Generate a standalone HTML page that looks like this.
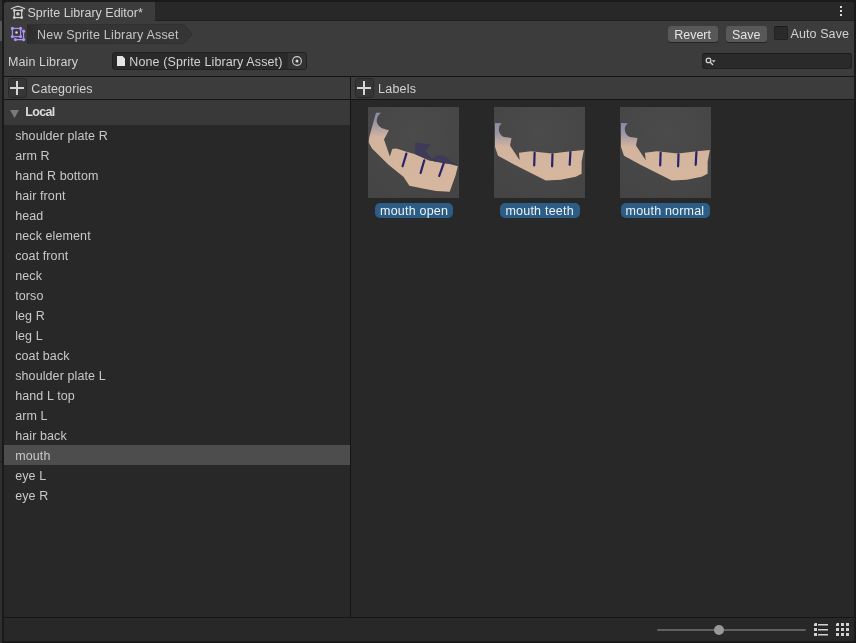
<!DOCTYPE html>
<html><head><meta charset="utf-8">
<style>
*{box-sizing:border-box;margin:0;padding:0}
html,body{width:856px;height:643px;overflow:hidden;background:#1a1a1a;font-family:"Liberation Sans",sans-serif;font-size:12.5px;color:#d2d2d2}
div{position:absolute}
.t{white-space:nowrap;line-height:14px}
.hl{height:1px;background:#151515}
.vl{width:1px;background:#151515}
.plus{width:18.8px;height:19.5px;border-radius:3px;background:#363636;border:1px solid #2a2a2a}
.plus:before{content:"";position:absolute;left:1px;top:8px;width:14px;height:2px;background:#d6d6d6}
.plus:after{content:"";position:absolute;left:7px;top:2px;width:2px;height:14px;background:#d6d6d6}
.item{color:#c8c8c8;letter-spacing:0.1px}
.btn{height:16px;background:#585858;border-radius:3px;box-shadow:0 1px 0 #242424}
.thumb{top:107px;width:91px;height:91px;background:#484848}
.pill{top:203px;height:15px;background:#2c5d87;border-radius:5px}
.pt{color:#eef2f6}
</style></head><body><div id="root" style="left:0;top:0;width:856px;height:643px;will-change:transform">
<!-- left strip (other window edge) -->
<div style="left:0;top:0;width:2px;height:643px;background:#2f2f2f"></div>
<div style="left:0;top:461px;width:2px;height:1px;background:#1c1c1c"></div>
<div style="left:0;top:21px;width:2px;height:20px;background:#565656"></div>

<!-- window base -->
<div style="left:4px;top:2px;width:850px;height:639px;background:#3c3c3c;border-radius:3px 3px 0 0;overflow:hidden">
  <div style="left:151px;top:0;width:699px;height:19px;background:#282828"></div>
  <div style="left:151px;top:18px;width:699px;height:1px;background:#202020"></div>
</div>


<!-- tab icon -->
<svg style="position:absolute;left:0;top:0" width="40" height="45" viewBox="0 0 40 45">
  <path d="M11.3,8.7 L15.2,7 Q17.9,5.9 20.6,7 L24.6,8.7" fill="none" stroke="#d2d2d2" stroke-width="1.25" stroke-linecap="round" stroke-linejoin="round"/>
  <rect x="14.3" y="10.4" width="7.4" height="7.2" fill="none" stroke="#d0d0d0" stroke-width="1.2"/>
  <circle cx="14.3" cy="10.4" r="1.35" fill="#d0d0d0"/><circle cx="21.7" cy="10.4" r="1.35" fill="#d0d0d0"/>
  <circle cx="14.3" cy="17.6" r="1.35" fill="#d0d0d0"/><circle cx="21.7" cy="17.6" r="1.35" fill="#d0d0d0"/>
  <circle cx="17.9" cy="13.9" r="1.7" fill="#cfcfcf"/>
  <!-- purple icon -->
  <g fill="#ad91f6" stroke="#ad91f6">
  <rect x="12.4" y="28.4" width="8.2" height="8.2" fill="none" stroke-width="1.15"/>
  <polyline points="23.6,31.2 23.6,39.6 15.4,39.6" fill="none" stroke-width="1.15"/>
  <circle cx="12.4" cy="28.4" r="1.6" stroke="none"/><circle cx="20.6" cy="28.4" r="1.6" stroke="none"/>
  <circle cx="12.4" cy="36.6" r="1.6" stroke="none"/><circle cx="20.6" cy="36.6" r="1.6" stroke="none"/>
  <circle cx="23.6" cy="31.2" r="1.6" stroke="none"/><circle cx="23.6" cy="39.6" r="1.6" stroke="none"/><circle cx="15.4" cy="39.6" r="1.6" stroke="none"/>
  </g>
  <circle cx="16.5" cy="32.5" r="1.2" fill="#d8d8d8"/>
</svg>
<!-- kebab -->
<div style="left:840px;top:6px;width:2px;height:2px;background:#dadada;box-shadow:0 4px 0 #dadada,0 8px 0 #dadada"></div>
<!-- tab -->
<div class="t" style="left:27.5px;top:6.3px">Sprite Library Editor*</div>


<!-- breadcrumb box -->
<svg style="position:absolute;left:26px;top:23px" width="170" height="22" viewBox="26 23 170 22">
  <defs><linearGradient id="cg" x1="0" x2="1" y1="0" y2="0"><stop offset="0" stop-color="#2c2c2c"/><stop offset="0.09" stop-color="#343434"/><stop offset="1" stop-color="#353535"/></linearGradient></defs>
  <path d="M27.5,24.5 H184 L192,34 L184,43.5 H27.5 Z" fill="url(#cg)" stroke="#303030" stroke-width="1"/>
  <path d="M27.5,24 V44" stroke="#2a2a2a" stroke-width="1"/>
</svg>
<!-- breadcrumb -->
<div class="t" style="left:37px;top:28.1px;color:#c4c4c4;letter-spacing:0.2px">New Sprite Library Asset</div>

<!-- main library row -->
<div class="t" style="left:8px;top:54.8px;letter-spacing:0.11px">Main Library</div>
<div style="left:112px;top:52px;width:195px;height:18px;background:#2a2a2a;border:1px solid #212121;border-radius:3px"></div>

<div style="left:288px;top:53px;width:18px;height:16px;background:#333333;border-radius:0 2px 2px 0"></div>
<svg style="position:absolute;left:110px;top:50px" width="200" height="22" viewBox="110 50 200 22">
  <path d="M117,56 H122.5 L125,58.5 V66 H117 Z" fill="#e4e4e4"/>
  <circle cx="297" cy="61" r="4.4" fill="none" stroke="#cfcfcf" stroke-width="1.1"/>
  <circle cx="297" cy="61" r="1.5" fill="#d8d8d8"/>
</svg>

<div class="t" style="left:129.3px;top:55.3px;letter-spacing:0.115px">None (Sprite Library Asset)</div>

<!-- buttons -->
<div class="btn" style="left:668px;top:26px;width:50px"></div>
<div class="btn" style="left:726px;top:26px;width:41px"></div>
<div class="t" style="left:674.2px;top:28.1px;color:#e4e4e4">Revert</div>
<div class="t" style="left:732px;top:28.1px;color:#e4e4e4">Save</div>
<div style="left:774px;top:26px;width:14px;height:14px;background:#2a2a2a;border:1px solid #222;border-top-color:#191919;border-radius:2px"></div>
<div class="t" style="left:790.6px;top:27.0px;letter-spacing:0.08px">Auto Save</div>
<div style="left:702px;top:53px;width:150px;height:15.5px;background:#2a2a2a;border:1px solid #222;border-top-color:#1a1a1a;border-radius:3px"></div>
<svg style="position:absolute;left:700px;top:52px" width="30" height="18" viewBox="700 52 30 18">
  <circle cx="708.5" cy="60.4" r="2.3" fill="none" stroke="#d0d0d0" stroke-width="1.3"/>
  <path d="M710.3,62.3 L713,65" stroke="#d0d0d0" stroke-width="1.4"/>
  <path d="M711.8,60.2 H715.6 L713.7,62.4 Z" fill="#cfcfcf"/>
</svg>

<!-- separators & headers -->
<div class="hl" style="left:4px;top:76px;width:850px"></div>
<div class="hl" style="left:4px;top:99px;width:850px"></div>
<div class="vl" style="left:350px;top:77px;height:540px"></div>
<div class="plus" style="left:7.8px;top:78px"></div>
<div class="t" style="left:31.3px;top:82.1px;letter-spacing:0.09px">Categories</div>
<div class="plus" style="left:354.8px;top:78px"></div>
<div class="t" style="left:378.1px;top:82.2px;letter-spacing:0.2px">Labels</div>

<!-- lists -->
<div style="left:4px;top:100px;width:346px;height:517px;background:#282828"></div>
<div style="left:351px;top:100px;width:503px;height:517px;background:#282828"></div>
<div style="left:4px;top:100px;width:346px;height:25px;background:#393939"></div>
<svg style="position:absolute;left:8px;top:108px" width="14" height="12" viewBox="8 108 14 12"><path d="M10,110 H19 L14.5,118 Z" fill="#7a7a7a"/></svg>
<div class="t" style="left:25.3px;top:105px;font-weight:bold;color:#dcdcdc;letter-spacing:-0.65px">Local</div>

<div style="left:4px;top:445px;width:346px;height:20px;background:#4d4d4d"></div>
<div class="item t" style="left:15.2px;top:129.3px">shoulder plate R</div>
<div class="item t" style="left:15.2px;top:149.3px">arm R</div>
<div class="item t" style="left:15.2px;top:169.3px">hand R bottom</div>
<div class="item t" style="left:15.2px;top:189.3px">hair front</div>
<div class="item t" style="left:15.2px;top:209.3px">head</div>
<div class="item t" style="left:15.2px;top:229.3px">neck element</div>
<div class="item t" style="left:15.2px;top:249.3px">coat front</div>
<div class="item t" style="left:15.2px;top:269.3px">neck</div>
<div class="item t" style="left:15.2px;top:289.3px">torso</div>
<div class="item t" style="left:15.2px;top:309.3px">leg R</div>
<div class="item t" style="left:15.2px;top:329.3px">leg L</div>
<div class="item t" style="left:15.2px;top:349.3px">coat back</div>
<div class="item t" style="left:15.2px;top:369.3px">shoulder plate L</div>
<div class="item t" style="left:15.2px;top:389.3px">hand L top</div>
<div class="item t" style="left:15.2px;top:409.3px">arm L</div>
<div class="item t" style="left:15.2px;top:429.3px">hair back</div>
<div class="item t" style="left:15.2px;top:449.3px">mouth</div>
<div class="item t" style="left:15.2px;top:469.3px">eye L</div>
<div class="item t" style="left:15.2px;top:489.3px">eye R</div>

<!-- thumbnails -->
<svg style="position:absolute;left:0;top:0" width="1" height="1"><defs>
<linearGradient id="jg" x1="0" x2="0" y1="0" y2="1" gradientUnits="objectBoundingBox"><stop offset="0" stop-color="#8a8ba8"/><stop offset="0.12" stop-color="#9a94a6"/><stop offset="0.3" stop-color="#d2b39c"/><stop offset="1" stop-color="#d6b79e"/></linearGradient>
<linearGradient id="jg2" x1="0" x2="0" y1="0" y2="1" gradientUnits="objectBoundingBox"><stop offset="0" stop-color="#8a8ba8"/><stop offset="0.18" stop-color="#9c95a5"/><stop offset="0.4" stop-color="#d2b39c"/><stop offset="1" stop-color="#d6b79e"/></linearGradient>
<radialGradient id="bg" cx="0.5" cy="0.3" r="0.8"><stop offset="0" stop-color="#4b4b4b"/><stop offset="1" stop-color="#444444"/></radialGradient>
</defs></svg>
<svg style="position:absolute;left:368px;top:107px" width="91" height="91" viewBox="0 0 91 91">
  <rect width="91" height="91" fill="url(#bg)"/>
  <path d="M8,5.8 L12.9,5.8 Q8.2,10 8.7,14.5 Q10,20.5 16.4,21.9 L20.9,23.3 L16,32.4 L21.9,49.6 L24.2,42.1 Q27,41.2 29.4,41.7 L36.9,44.3 L47.3,47.3 L60.8,53.3 L68.2,54.8 L81.7,57 L89.9,59.3 L87.6,68.2 L81.7,84.7 L68.2,83.9 L54.8,81.6 L41.4,78.7 L35.4,69.7 L20.5,57.8 L4,41.4 L0.7,35.4 L1.3,30 Z" fill="url(#jg)"/>
  <path d="M47.3,35.4 L63,37.6 L57.8,44.3 L63.8,51.8 L68.2,48.8 Q74,47.2 77.2,49.6 L83.2,54.1 L89.5,57.8 L81.7,57 L68.2,54.8 L60.8,53.3 L47.3,47.3 Z" fill="#3d3b58"/>
  <g stroke="#28226a" stroke-width="2.2" stroke-linecap="round">
  <path d="M38.4,46.6 L34.6,59.3"/><path d="M56.3,53.3 L52.6,66"/><path d="M75.7,56.3 L71.2,69"/>
  </g>
</svg>
<svg style="position:absolute;left:494px;top:107px" width="91" height="91" viewBox="0 0 91 91">
  <rect width="91" height="91" fill="url(#bg)"/>
  <path d="M1,16 L7.8,16.3 Q4.5,19 4.8,22.5 Q5.5,28.5 10,30 L17.5,30.9 L16,38.4 L25.7,53.3 L24.9,45.8 L36.9,44.3 L57.8,46.6 L77.2,44.3 L89.9,42.9 L87.6,54.8 L87.6,66.7 L81.7,69.7 L66.7,72.7 L51.8,73.4 L38.4,66.7 L20.5,57.8 L4,48.8 L1,39.9 Z" fill="url(#jg2)"/>
  <g stroke="#28226a" stroke-width="2.2" stroke-linecap="round">
  <path d="M40.6,45.8 L40.2,58.5"/><path d="M58.5,47.3 L58.1,59.3"/><path d="M76.4,45.1 L75.7,57.8"/>
  </g>
</svg>
<svg style="position:absolute;left:620px;top:107px" width="91" height="91" viewBox="0 0 91 91">
  <rect width="91" height="91" fill="url(#bg)"/>
  <path d="M1,16 L7.8,16.3 Q4.5,19 4.8,22.5 Q5.5,28.5 10,30 L17.5,30.9 L16,38.4 L25.7,53.3 L24.9,45.8 L36.9,44.3 L57.8,46.6 L77.2,44.3 L89.9,42.9 L87.6,54.8 L87.6,66.7 L81.7,69.7 L66.7,72.7 L51.8,73.4 L38.4,66.7 L20.5,57.8 L4,48.8 L1,39.9 Z" fill="url(#jg2)"/>
  <g stroke="#28226a" stroke-width="2.2" stroke-linecap="round">
  <path d="M40.6,45.8 L40.2,58.5"/><path d="M58.5,47.3 L58.1,59.3"/><path d="M76.4,45.1 L75.7,57.8"/>
  </g>
</svg>
<div class="pill" style="left:375px;width:78px"></div>
<div class="pill" style="left:500px;width:80px"></div>
<div class="pill" style="left:621px;width:89px"></div>
<div class="t pt" style="left:380.1px;top:204.2px;letter-spacing:0.2px">mouth open</div>
<div class="t pt" style="left:505.4px;top:204.2px;letter-spacing:0.23px">mouth teeth</div>
<div class="t pt" style="left:625.6px;top:204.2px;letter-spacing:0.19px">mouth normal</div>

<!-- bottom bar -->
<div class="hl" style="left:4px;top:617px;width:850px"></div>
<div style="left:4px;top:618px;width:850px;height:23px;background:#282828"></div>

<div style="left:657px;top:629px;width:149px;height:2px;background:#606060;border-radius:1px"></div>
<div style="left:713.8px;top:624.8px;width:10.4px;height:10.4px;background:#999999;border-radius:50%"></div>
<svg style="position:absolute;left:810px;top:620px" width="44" height="20" viewBox="810 620 44 20">
  <g fill="#d2d2d2">
  <path d="M815,623 H817 V626 H814 V624 Z"/><rect x="814" y="628" width="3" height="3"/><rect x="814" y="633" width="3" height="3"/>
  <rect x="818" y="624" width="10" height="1.5"/><rect x="818" y="629" width="10" height="1.5"/><rect x="818" y="634" width="10" height="1.5"/>
  <path d="M837,623 H839 V626 H836 V624 Z"/><rect x="841" y="623" width="3" height="3"/><rect x="846" y="623" width="3" height="3"/>
  <rect x="836" y="628" width="3" height="3"/><rect x="841" y="628" width="3" height="3"/><rect x="846" y="628" width="3" height="3"/>
  <rect x="836" y="633" width="3" height="3"/><rect x="841" y="633" width="3" height="3"/><rect x="846" y="633" width="3" height="3"/>
  </g>
</svg>
</div></body></html>
